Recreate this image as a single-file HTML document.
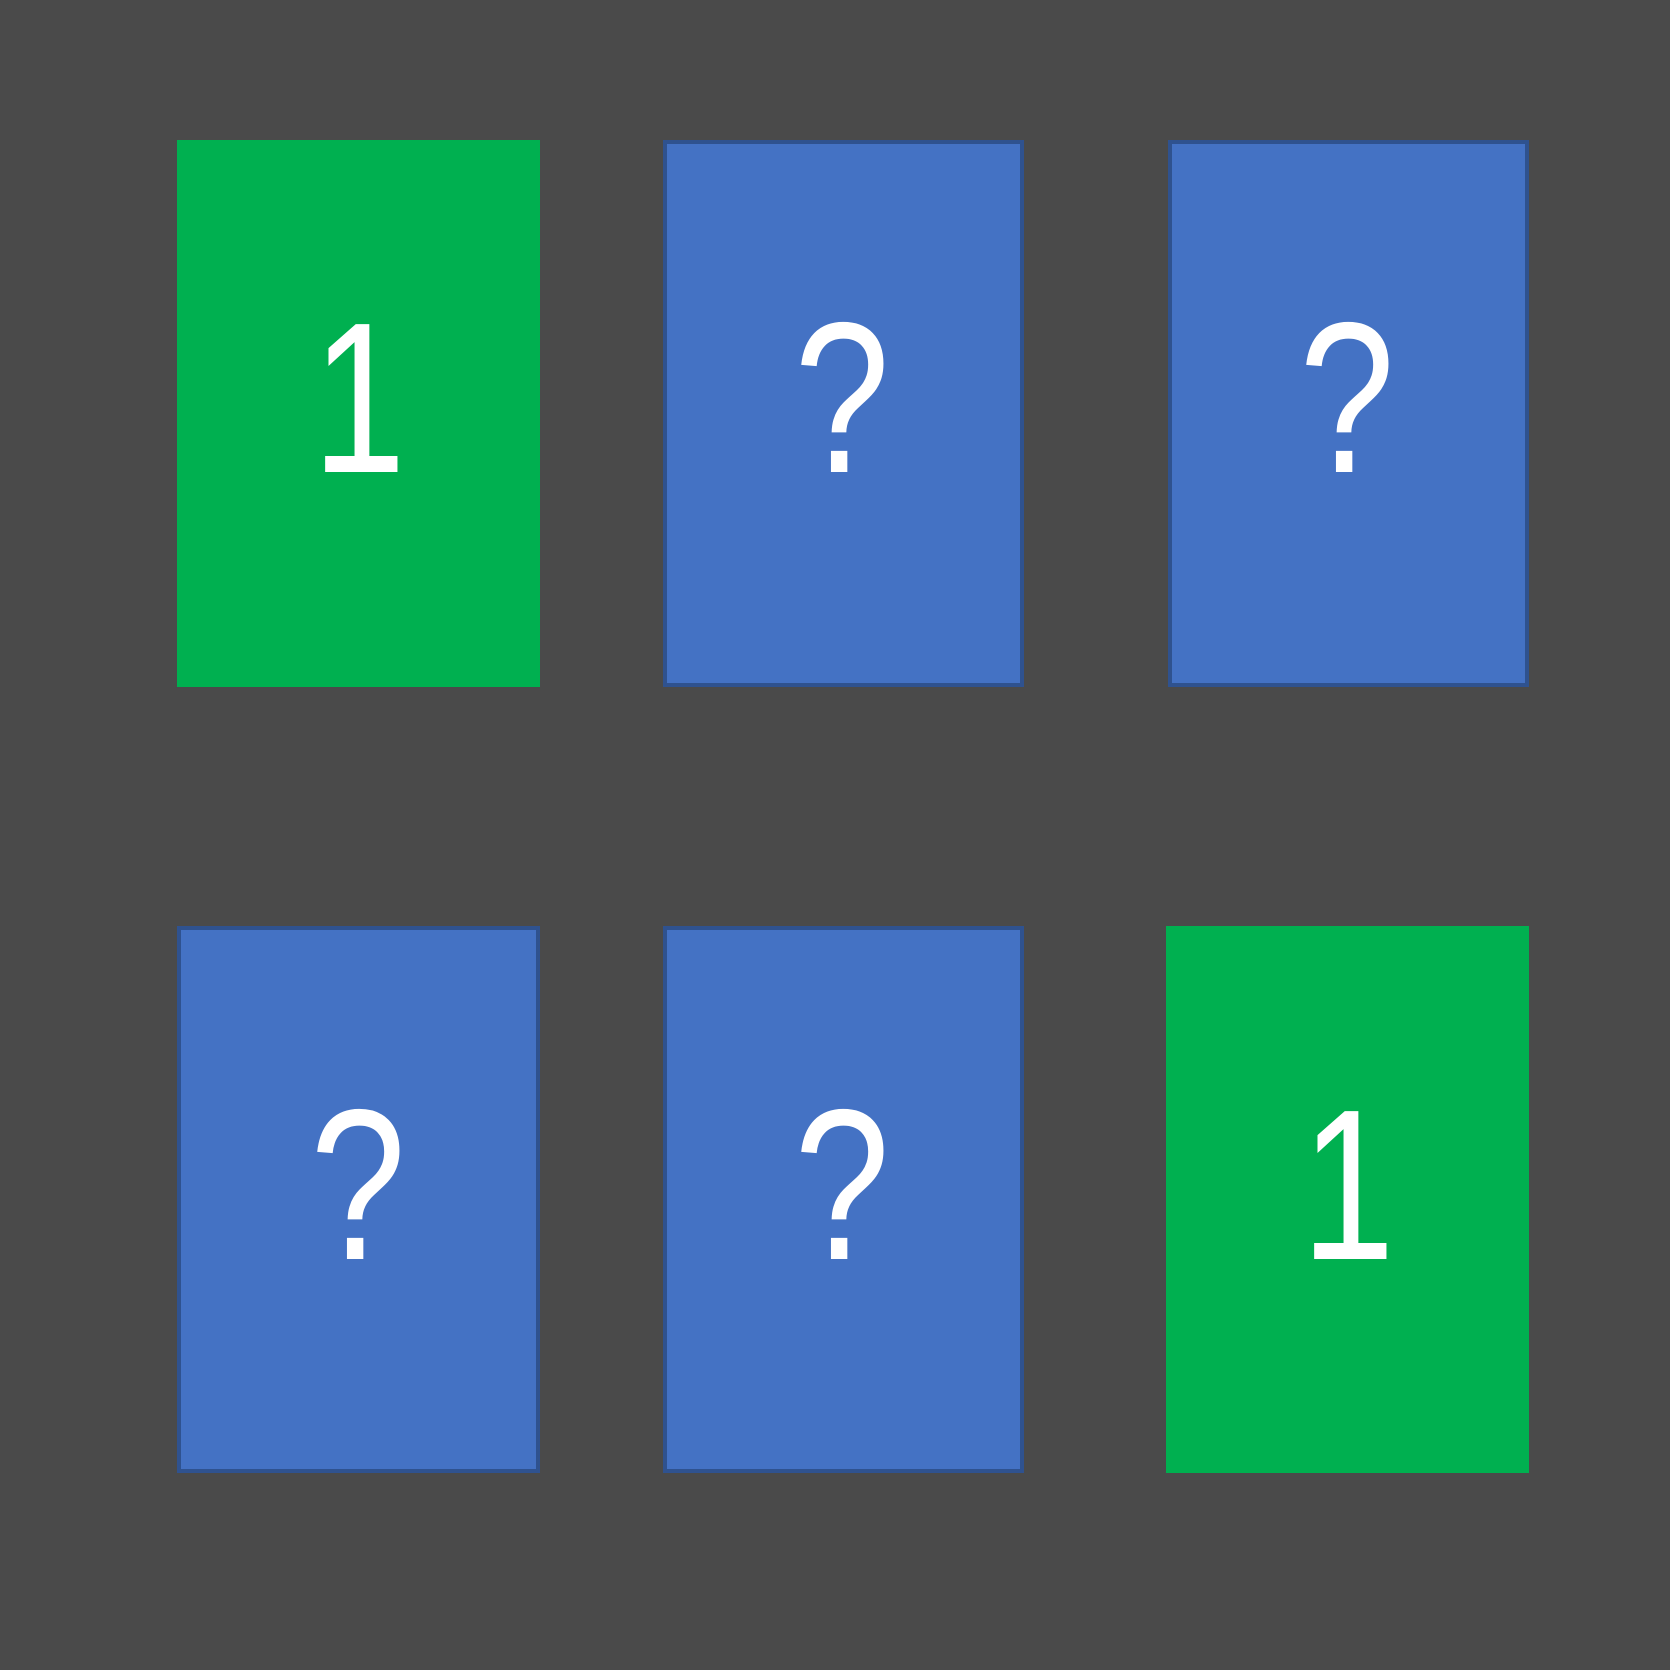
<!DOCTYPE html>
<html><head><style>
html,body{margin:0;padding:0;background:#4a4a4a;width:1670px;height:1670px;overflow:hidden}
</style></head><body>
<svg width="1670" height="1670" xmlns="http://www.w3.org/2000/svg" style="display:block">
<rect width="1670" height="1670" fill="#4a4a4a"/>
<rect x="177" y="140" width="363" height="547" fill="#00b050"/>
<rect x="665" y="142" width="357" height="543" fill="#4472c4" stroke="#2f528f" stroke-width="4"/>
<rect x="1170" y="142" width="357" height="543" fill="#4472c4" stroke="#2f528f" stroke-width="4"/>
<rect x="179" y="928" width="359" height="543" fill="#4472c4" stroke="#2f528f" stroke-width="4"/>
<rect x="665" y="928" width="357" height="543" fill="#4472c4" stroke="#2f528f" stroke-width="4"/>
<rect x="1166" y="926" width="363" height="547" fill="#00b050"/>
<g font-family="Liberation Sans, sans-serif" font-size="215" fill="#fff" text-anchor="middle">
<text transform="translate(359,472) scale(0.78,1)">1</text>
<text transform="translate(842,472) scale(0.8,1)">?</text>
<text transform="translate(1347,472) scale(0.8,1)">?</text>
<text transform="translate(358,1259) scale(0.8,1)">?</text>
<text transform="translate(842,1259) scale(0.8,1)">?</text>
<text transform="translate(1348,1259) scale(0.78,1)">1</text>
</g>
</svg>
</body></html>
